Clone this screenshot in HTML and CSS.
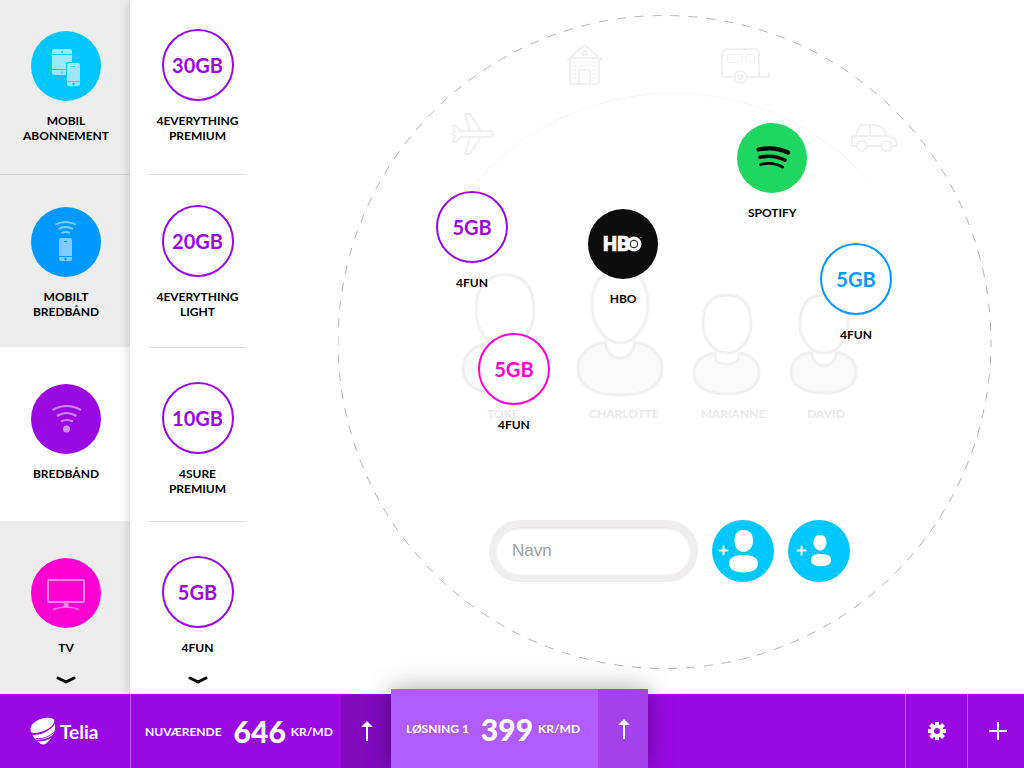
FILE: index.html
```html
<!DOCTYPE html>
<html lang="da">
<head>
<meta charset="utf-8">
<meta name="viewport" content="width=device-width, initial-scale=1">
<title>Telia</title>
<link rel="stylesheet" href="styles.css">
</head>
<body>
<main class="workspace">
  <nav class="categories" aria-label="Kategorier">
    <div class="category">
      <button class="tile" type="button">
        <svg class="disc disc--cyan" viewBox="0 0 70 70" aria-hidden="true">
          <g fill="#fff" fill-opacity=".6">
            <path d="M23 18h16a2 2 0 0 1 2 2v3H21v-3a2 2 0 0 1 2-2zM21 24h20v7h-4a2 2 0 0 0-2 2v5H21zM21 39h14v5H23a2 2 0 0 1-2-2z"/>
            <path d="M38 32h9a2 2 0 0 1 2 2v16H36V34a2 2 0 0 1 2-2zM36 51h13v2a2 2 0 0 1-2 2h-9a2 2 0 0 1-2-2z"/>
          </g>
          <path d="M41 35.500h3M42.500 51.500v3M41 53h3M31 20v2M31 40.500v2" stroke="#00c8ff" stroke-width="1.200"/>
        </svg>
        <span class="label">MOBIL<br>ABONNEMENT</span>
      </button>
    </div>
    <div class="category category--ruled">
      <button class="tile" type="button">
        <svg class="disc disc--blue" viewBox="0 0 70 70" aria-hidden="true">
          <g fill="#fff" fill-opacity=".5">
            <path d="M30 31h9a2 2 0 0 1 2 2v16H28V33a2 2 0 0 1 2-2zM28 50h13v2a2 2 0 0 1-2 2h-9a2 2 0 0 1-2-2z"/>
          </g>
          <path d="M33 34.500h3M34.500 50.500v3M33 52h3" stroke="#0099ff" stroke-width="1.200"/>
          <path d="M24.500 17.500q10-5 20.500 0M27.500 22q7-4 14.500 0M30.500 26q4-2 8.500 0" fill="none" stroke="#fff" stroke-opacity=".5" stroke-width="1.800"/>
        </svg>
        <span class="label">MOBILT<br>BREDBÅND</span>
      </button>
    </div>
    <div class="category category--active">
      <button class="tile" type="button" aria-current="true">
        <svg class="disc disc--purple" viewBox="0 0 70 70" aria-hidden="true">
          <path d="M21.500 26q14-8 28.500 0M26 32q9.500-6 19.500 0M30 37.500q5.500-3 12 0" fill="none" stroke="#fff" stroke-opacity=".5" stroke-width="2.200"/>
          <circle cx="35.500" cy="45" r="3.500" fill="#fff" fill-opacity=".55"/>
        </svg>
        <span class="label">BREDBÅND</span>
      </button>
    </div>
    <div class="category">
      <button class="tile" type="button">
        <svg class="disc disc--pink" viewBox="0 0 70 70" aria-hidden="true">
          <g fill="none" stroke="#fff" stroke-opacity=".5">
            <rect x="17" y="22" width="36" height="22" rx="1" stroke-width="2"/>
            <path d="M35 45v4" stroke-width="5"/>
            <path d="M22 51.500q13-5 26 0" stroke-width="1.500"/>
          </g>
        </svg>
        <span class="label">TV</span>
      </button>
      <button class="more" type="button" aria-label="Flere kategorier">
        <svg viewBox="0 0 20 8" aria-hidden="true"><path d="M2 2l8 4 8-4"/></svg>
      </button>
    </div>
  </nav>

  <section class="products" aria-label="Produkter">
    <div class="product">
      <button class="tile" type="button"><span class="ring">30GB</span><span class="label">4EVERYTHING<br>PREMIUM</span></button>
    </div>
    <div class="product">
      <button class="tile" type="button"><span class="ring">20GB</span><span class="label">4EVERYTHING<br>LIGHT</span></button>
    </div>
    <div class="product">
      <button class="tile" type="button"><span class="ring">10GB</span><span class="label">4SURE<br>PREMIUM</span></button>
    </div>
    <div class="product">
      <button class="tile" type="button"><span class="ring">5GB</span><span class="label">4FUN</span></button>
      <button class="more" type="button" aria-label="Flere produkter">
        <svg viewBox="0 0 20 8" aria-hidden="true"><path d="M2 2l8 4 8-4"/></svg>
      </button>
    </div>
  </section>

  <section class="stage" aria-label="Husstand">
    <div class="board">
      <svg class="scene" viewBox="338 15 654 654">
        <circle class="boundary" cx="664.500" cy="342" r="326.500"/>
        <path class="horizon" d="M476 182A263 263 0 0 1 871 183"/>

        <g class="faint">
          <path d="M567 60l17.500-15L602 60M569 58h31M570 58v24q0 2 2 2h25q2 0 2-2V58M579 84V70h11v14"/>
          <circle cx="584.500" cy="53" r="2"/>
          <path class="hair" d="M571 62h27M571 66h27M571 70h7M591 70h7M571 74h7M591 74h7M571 78h7M591 78h7"/>
        </g>
        <g class="faint">
          <path d="M734 77h-12V55q0-6 6-6h26q5 0 5 6v22h-12M747 77h22v-5"/>
          <rect class="hair" x="727.500" y="54.500" width="14" height="8" rx="1"/>
          <rect class="hair" x="746.500" y="54.500" width="8" height="8" rx="1"/>
          <circle cx="740.500" cy="77" r="6"/>
          <circle cx="740.500" cy="77" r="2"/>
        </g>
        <g class="faint">
          <path d="M461 131h29q3 0 3 3t-3 3h-29l-5 5h-3l2-6-3-2 3-2-2-6h3zM470 131l-5-17h5l11 17M470 137l-5 17h5l11-17"/>
        </g>
        <g class="faint">
          <path d="M857 146h-5V136h4q3-11 6-11h15q6 2 10 11 10 1 10 8v2h-6M867 146h15M856 136h31M870 125v11"/>
          <circle cx="862" cy="146" r="5"/>
          <circle cx="886.500" cy="146" r="5"/>
        </g>

        <g class="person">
          <path class="torso" d="M491 342c-18 3-28 13-28 27 0 18 19 26 43 26s43-8 43-26c0-14-10-24-28-27v5c0 15-30 15-30 0z"/>
          <path d="M505 275c19 0 29 12 29 36 0 20-14 37-29 37s-29-17-29-37c0-24 10-36 29-36z"/>
          <text x="503" y="418">TOKE</text>
        </g>
        <g class="person">
          <path class="torso" d="M606 342c-18 3-28 13-28 27 0 18 18 26 42 26s42-8 42-26c0-14-10-24-28-27v5c-5 15-22 15-28 0z"/>
          <path d="M620 270c19 0 28 12 28 36 0 20-14 37-28 37s-28-17-28-37c0-24 9-36 28-36z"/>
          <text x="624" y="418">CHARLOTTE</text>
        </g>
        <g class="person">
          <path class="torso" d="M715 353c-14 2-21 10-21 20 0 14 14 21 33 21s32-7 32-21c0-10-7-18-20-20v5c-2 8-22 8-24 0z"/>
          <path d="M727 295c16 0 24 9 24 29 0 17-12 29-24 29s-24-12-24-29c0-20 8-29 24-29z"/>
          <text x="733" y="418">MARIANNE</text>
        </g>
        <g class="person">
          <path class="torso" d="M812 352c-14 2-21 10-21 20 0 14 14 21 33 21s32-7 32-21c0-10-7-18-20-20v5c-6 12-18 12-24 0z"/>
          <path d="M824 295c16 0 24 9 24 29 0 17-12 29-24 29s-24-12-24-29c0-20 8-29 24-29z"/>
          <text x="826" y="418">DAVID</text>
        </g>
      </svg>

      <button class="tile pin pin--first" type="button"><span class="ring">5GB</span><span class="label">4FUN</span></button>
      <button class="tile pin pin--hbo" type="button">
        <svg class="disc disc--black" viewBox="0 0 70 70" aria-hidden="true">
          <text class="hbo" x="15" y="42">HB</text>
          <circle cx="46" cy="35" r="7.500" fill="#fff"/>
          <circle cx="46" cy="35" r="3.800" fill="none" stroke="#111"/>
          <circle cx="53" cy="28.500" r=".8" fill="#888"/>
        </svg>
        <span class="label">HBO</span>
      </button>
      <button class="tile pin pin--spotify" type="button">
        <svg class="disc disc--green" viewBox="0 0 70 70" aria-hidden="true">
          <g fill="none" stroke="#000" stroke-linecap="round">
            <path d="M21.500 26.500q16-3.500 29.500 3" stroke-width="4.200"/>
            <path d="M23 34.200q14-3 25 3" stroke-width="3.600"/>
            <path d="M23.500 41.500q12-3 22 2.500" stroke-width="2.800"/>
          </g>
        </svg>
        <span class="label">SPOTIFY</span>
      </button>
      <button class="tile pin pin--blue" type="button"><span class="ring ring--blue">5GB</span><span class="label">4FUN</span></button>
      <button class="tile pin pin--pink" type="button"><span class="ring ring--pink">5GB</span><span class="label">4FUN</span></button>

      <form class="add-person">
        <input class="name-field" type="text" placeholder="Navn" aria-label="Navn">
        <button class="add" type="button" aria-label="Tilføj voksen">
          <svg viewBox="0 0 62 62" aria-hidden="true">
            <path d="M31.500 10c6 0 9.500 4 9.500 10.500S37 32 31.500 32 22.500 27 22.500 20.500 25.500 10 31.500 10z"/>
            <path d="M31.500 35C41 35 46 38 46 43.500S41 52.500 31.500 52.500 17 49 17 43.500 22 35 31.500 35z"/>
            <path class="plus" d="M11.500 26.500v8M7.500 30.500h8"/>
          </svg>
        </button>
        <button class="add" type="button" aria-label="Tilføj barn">
          <svg viewBox="0 0 62 62" aria-hidden="true">
            <path d="M32 15c4.500 0 6.500 3 6.500 7.500S35.500 30.500 32 30.500s-6.500-3.500-6.500-8S27.500 15 32 15z"/>
            <path d="M33 34c7 0 10 2 10 6s-3 6-10 6-10-2-10-6 3-6 10-6z"/>
            <path class="plus" d="M13.500 26.500v8M9.500 30.500h8"/>
          </svg>
        </button>
      </form>
    </div>
  </section>
</main>

<footer class="bar">
  <a class="brand" href="#">
    <svg class="brand-mark" viewBox="0 0 26 28" aria-hidden="true">
      <path d="M.5 13C0 7 7 2 15 1c5-.8 9 .2 9.300 2.500C25 9 14 16 3.500 16 1.500 16 .6 15 .5 13z"/>
      <path d="M2.500 18c9 .5 18-4.500 22.500-11 .5 5-.5 8-2 10.500-4 4-11 5.500-17.500 5-1.500-1.500-2.500-3-3-4.500z"/>
      <path d="M7.500 24c5 .8 10-.5 13.500-3-2 3-4 5.500-7 6.500-2.500.2-4.500-1-6.500-3.500z"/>
      <path class="groove" d="M6 21.500c7 .5 13-1.500 17.500-6"/>
    </svg>
    <span>Telia</span>
  </a>
  <div class="plan">
    <p class="plan-body"><span class="unit">NUVÆRENDE</span> <strong class="price">646</strong> <span class="unit">KR/MD</span></p>
    <button class="plan-open" type="button" aria-label="Åbn nuværende">
      <svg viewBox="0 0 12 20" aria-hidden="true"><path d="M5 6v14h2V6h5L6 0 0 6z"/></svg>
    </button>
  </div>
  <div class="plan plan--raised">
    <p class="plan-body"><span class="unit">LØSNING 1</span> <strong class="price">399</strong> <span class="unit">KR/MD</span></p>
    <button class="plan-open" type="button" aria-label="Åbn løsning 1">
      <svg viewBox="0 0 12 20" aria-hidden="true"><path d="M5 6v14h2V6h5L6 0 0 6z"/></svg>
    </button>
  </div>
  <div class="tools">
    <button class="tool" type="button" aria-label="Indstillinger">
      <svg viewBox="-10 -10 20 20" aria-hidden="true">
        <g stroke="#fff" stroke-width="4"><path d="M0-9V-5M0 9V5M-9 0H-5M9 0H5M-6.500-6.500L-4-4M6.500 6.500L4 4M-6.500 6.500L-4 4M6.500-6.500L4-4"/></g>
        <circle r="4.800" fill="none" stroke="#fff" stroke-width="3.600"/>
      </svg>
    </button>
    <button class="tool" type="button" aria-label="Tilføj løsning">
      <svg viewBox="-10 -10 20 20" aria-hidden="true"><path d="M-9 0H9M0-9V9" stroke="#fff" stroke-width="2"/></svg>
    </button>
  </div>
</footer>
</body>
</html>
```
FILE: styles.css
```css
:root {
  --purple: #990ae3;
  --cyan: #00c8ff;
  --blue: #0099ff;
  --pink: #ff00d2;
  --faint: #f1f1f1;
}

* { box-sizing: border-box; }

body {
  margin: 0;
  min-height: 100vh;
  display: flex;
  flex-direction: column;
  background: #fff;
  color: #000;
  font-family: Lato, "Open Sans", sans-serif;
  font-weight: 700;
}

button {
  margin: 0;
  padding: 0;
  border: 0;
  background: none;
  color: inherit;
  font: inherit;
  cursor: pointer;
}

svg { display: block; }

.workspace {
  flex: 1;
  display: grid;
  grid-template-columns: 130px 136px 1fr;
}

.categories,
.products {
  display: grid;
  grid-template-rows: repeat(4, 1fr);
}

.categories { background: #ededed; }

.category,
.product {
  display: flex;
  flex-direction: column;
  align-items: center;
}

.category { padding: 31px 0 10px 2px; }
.category:nth-child(2) { padding-top: 32px; }
.category:nth-child(n+3) { padding-top: 37px; }
.category--ruled { border-top: 1px solid #d4d4d4; }
.category--active { background: #fff; }

.products {
  padding: 0 20px 0 19px;
  background: #fff;
  box-shadow: 0 0 12px rgba(0, 0, 0, .2);
  clip-path: inset(0 0 0 -10px);
}

.product { padding: 29px 0 10px; }
.product + .product { border-top: 1px solid #dcdcdc; }
.product:nth-child(2) { padding-top: 30px; }
.product:nth-child(n+3) { padding-top: 34px; }

.tile {
  display: flex;
  flex-direction: column;
  align-items: center;
  gap: 12px;
}

.label {
  font-size: 12px;
  line-height: 15px;
  text-align: center;
}

.disc {
  width: 70px;
  height: 70px;
  border-radius: 50%;
}

.disc--cyan { background: var(--cyan); }
.disc--blue { background: var(--blue); }
.disc--purple { background: var(--purple); }
.disc--pink { background: var(--pink); }
.disc--green { background: #1fd760; }
.disc--black { background: #0d0d0d; }

.hbo {
  fill: #fff;
  stroke: #fff;
  stroke-width: .5px;
  font: 900 20px Roboto, sans-serif;
}

.ring {
  display: grid;
  place-items: center;
  width: 72px;
  height: 72px;
  border: 2px solid var(--purple);
  border-radius: 50%;
  background: #fff;
  color: var(--purple);
  font-size: 20px;
}

.ring--blue { border-color: var(--blue); color: var(--blue); }
.ring--pink { border-color: var(--pink); color: var(--pink); }

.more { margin-top: auto; }
.more svg { width: 20px; height: 8px; }
.more path {
  fill: none;
  stroke: #000;
  stroke-width: 3;
  stroke-linecap: round;
  stroke-linejoin: round;
}

.stage { padding: 15px 32px 0 72px; }

.board {
  position: relative;
  max-width: 900px;
  aspect-ratio: 1;
}

.scene { width: 100%; height: 100%; }

.boundary {
  fill: none;
  stroke: #b5b5b5;
  stroke-dasharray: 9 9;
  stroke-dashoffset: -14;
}

.horizon { fill: none; stroke: #f5f5f5; }

.faint {
  fill: none;
  stroke: var(--faint);
  stroke-width: 2;
  stroke-linejoin: round;
}

.hair { stroke-width: 1; }

.person path {
  fill: #fff;
  stroke: var(--faint);
  stroke-width: 3;
}

.person .torso { fill: #fafafa; }

.person text {
  fill: #ebebeb;
  font-size: 12px;
  text-anchor: middle;
}

/* Pins are anchored at the centre of their disc. */
.pin {
  position: absolute;
  width: 96px;
  margin: -36px 0 0 -48px;
}

.pin--first { left: 20.5%; top: 32.4%; }
.pin--hbo { left: 43.6%; top: 35.2%; }
.pin--spotify { left: 66.4%; top: 22%; }
.pin--blue { left: 79.2%; top: 40.4%; }
.pin--pink { left: 26.9%; top: 54.1%; }

.add-person {
  position: absolute;
  left: 23.1%;
  top: 77.2%;
  display: flex;
  align-items: center;
  gap: 14px;
}

.name-field {
  width: 209px;
  height: 62px;
  padding: 0 16px;
  border: 7px solid #efeded;
  border-radius: 31px;
  background: #fff;
  box-shadow: inset 0 1px 3px rgba(0, 0, 0, .15);
  color: #333;
  font: 17px "Liberation Sans", Arial, sans-serif;
}

.name-field::placeholder { color: #a0a0a0; }

.add {
  width: 62px;
  height: 62px;
  border-radius: 50%;
  background: var(--cyan);
}

.add path { fill: #fff; }
.add .plus { stroke: #fff; stroke-width: 2; stroke-linecap: round; }

.bar {
  position: relative;
  display: flex;
  height: 74px;
  background: var(--purple);
  color: #fff;
}

.brand {
  display: flex;
  align-items: center;
  gap: 4px;
  width: 131px;
  padding-left: 30px;
  border-right: 1px solid #bb5cf0;
  color: #fff;
  font-size: 19px;
  text-decoration: none;
}

.brand-mark { width: 26px; height: 28px; fill: #fff; }
.groove { fill: none; stroke: var(--purple); }

.plan { display: flex; }

.plan-body {
  display: flex;
  align-items: center;
  width: 210px;
  margin: 0;
  padding-left: 14px;
}

.unit { font-size: 12px; }

.price {
  margin: 0 5px 0 12px;
  font-size: 30px;
  font-weight: 900;
}

.plan-open {
  display: grid;
  place-items: center;
  width: 50px;
  padding-left: 2px;
  background: #820abf;
}

.plan-open svg { width: 12px; height: 20px; fill: #fff; }

.plan--raised {
  z-index: 1;
  margin-top: -5px;
  background: #b05cff;
  box-shadow: 0 0 24px rgba(0, 0, 0, .35);
}

.plan--raised .plan-body { width: 207px; padding-left: 15px; }
.plan--raised .plan-open { background: #a342ea; }

.tools { display: flex; margin-left: auto; }

.tool {
  display: grid;
  place-items: center;
  width: 62px;
  border-left: 1px solid #bb5cf0;
}

.tool:last-child { width: 57px; padding-left: 4px; }
.tool svg { width: 20px; height: 20px; }
```
